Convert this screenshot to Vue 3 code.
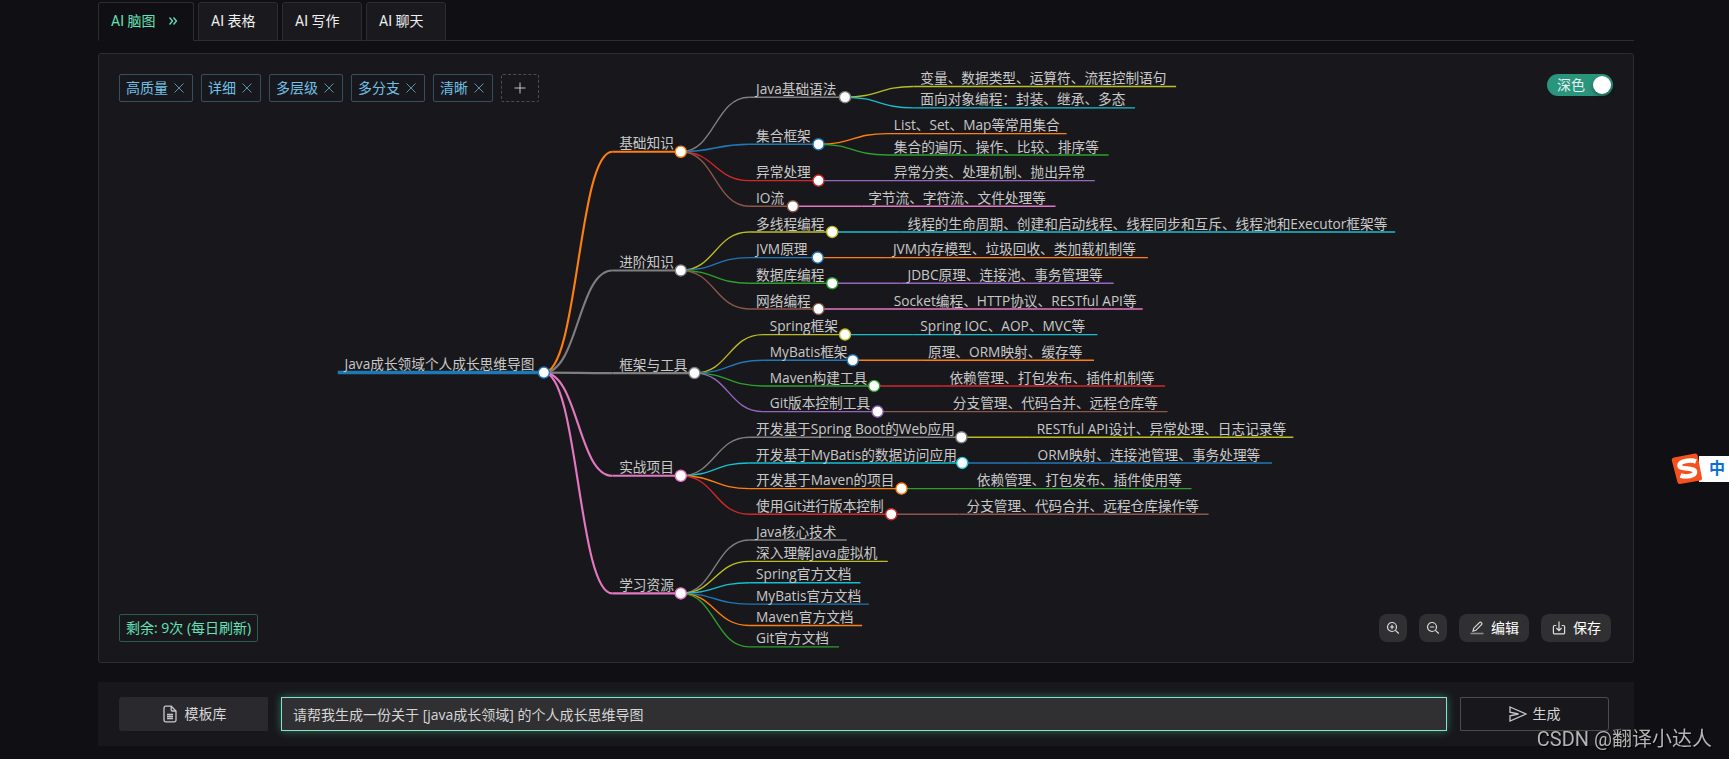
<script setup>
import { ref } from 'vue'

const tabs = ['AI 脑图', 'AI 表格', 'AI 写作', 'AI 聊天']
const activeTab = ref(0)
const tags = ref(['高质量', '详细', '多层级', '多分支', '清晰'])
const dark = ref(true)
const prompt = ref('请帮我生成一份关于 [java成长领域] 的个人成长思维导图')

const BLUE = '#1f77b4'
const ORANGE = '#ff7f0e'
const GREEN = '#2ca02c'
const RED = '#d62728'
const PURPLE = '#9467bd'
const BROWN = '#8c564b'
const PINK = '#e377c2'
const GRAY = '#7f7f7f'
const OLIVE = '#bcbd22'
const CYAN = '#17becf'

const n = (text, w, color, children = []) => ({ text, w, color, children })

const tree = n('Java成长领域个人成长思维导图', 241, BLUE, [
  n('基础知识', 80, ORANGE, [
    n('Java基础语法', 112, GRAY, [
      n('变量、数据类型、运算符、流程控制语句', 307, OLIVE),
      n('面向对象编程：封装、继承、多态', 259, CYAN),
    ]),
    n('集合框架', 81, BLUE, [
      n('List、Set、Map等常用集合', 210, ORANGE),
      n('集合的遍历、操作、比较、排序等', 259, GREEN),
    ]),
    n('异常处理', 81, RED, [n('异常分类、处理机制、抛出异常', 243, PURPLE)]),
    n('IO流', 51, BROWN, [n('字节流、字符流、文件处理等', 227, PINK)]),
  ]),
  n('进阶知识', 80, GRAY, [
    n('多线程编程', 97, OLIVE, [
      n('线程的生命周期、创建和启动线程、线程同步和互斥、线程池和Executor框架等', 578, CYAN),
    ]),
    n('JVM原理', 80, BLUE, [n('JVM内存模型、垃圾回收、类加载机制等', 306, ORANGE)]),
    n('数据库编程', 97, GREEN, [n('JDBC原理、连接池、事务管理等', 249, PURPLE)]),
    n('网络编程', 81, BROWN, [n('Socket编程、HTTP协议、RESTful API等', 299, PINK)]),
  ]),
  n('框架与工具', 96, GRAY, [
    n('Spring框架', 96, OLIVE, [n('Spring IOC、AOP、MVC等', 215, CYAN)]),
    n('MyBatis框架', 105, BLUE, [n('原理、ORM映射、缓存等', 202, ORANGE)]),
    n('Maven构建工具', 130, GREEN, [n('依赖管理、打包发布、插件机制等', 260, RED)]),
    n('Git版本控制工具', 134, PURPLE, [n('分支管理、代码合并、远程仓库等', 259, BROWN)]),
  ]),
  n('实战项目', 80, PINK, [
    n('开发基于Spring Boot的Web应用', 248, GRAY, [n('RESTful API设计、异常处理、日志记录等', 308, OLIVE)]),
    n('开发基于MyBatis的数据访问应用', 249, CYAN, [n('ORM映射、连接池管理、事务处理等', 282, BLUE)]),
    n('开发基于Maven的项目', 178, ORANGE, [n('依赖管理、打包发布、插件使用等', 259, GREEN)]),
    n('使用Git进行版本控制', 166, RED, [n('分支管理、代码合并、远程仓库操作等', 291, BROWN)]),
  ]),
  n('学习资源', 80, PINK, [
    n('Java核心技术', 114, GRAY),
    n('深入理解Java虚拟机', 162, OLIVE),
    n('Spring官方文档', 130, CYAN),
    n('MyBatis官方文档', 140, BLUE),
    n('Maven官方文档', 132, ORANGE),
    n('Git官方文档', 105, GREEN),
  ]),
])

// Tidy layout: leaves stack downwards, a parent sits midway between its outer children.
const LEVEL_GAP = 80
const SIBLING_STEP = 25
const COUSIN_STEP = 30
const strokes = [4, 2.5, 1.6, 1.6]
const nodes = []
const links = []
let nextY = 38
let lastParent = null

function place(node, parent, depth, x) {
  const end = x + node.w
  const placed = { ...node, x, end, depth, stroke: strokes[depth] }
  if (node.children.length) {
    const kids = node.children.map((c) => place(c, node, depth + 1, end + LEVEL_GAP))
    placed.y = (kids[0].y + kids[kids.length - 1].y) / 2
    kids.forEach((k) => {
      const mid = end + LEVEL_GAP / 2
      links.push({
        d: `M${end},${placed.y}C${mid},${placed.y} ${mid},${k.y} ${k.x},${k.y}`,
        color: k.color,
        stroke: k.stroke,
      })
    })
  } else {
    if (lastParent) nextY += lastParent === parent ? SIBLING_STEP : COUSIN_STEP
    placed.y = nextY
    lastParent = parent
  }
  nodes.push(placed)
  return placed
}
place(tree, null, 0, 279)

function removeTag(i) {
  tags.value.splice(i, 1)
}
</script>

<template>
  <main class="page">
    <nav class="tabs" aria-label="AI 工具">
      <button
        v-for="(t, i) in tabs"
        :key="t"
        type="button"
        class="tab"
        :class="{ active: i === activeTab }"
        @click="activeTab = i"
      >
        <span>{{ t }}</span>
        <svg v-if="i === activeTab" class="chevrons" width="10" height="10" viewBox="0 0 10 10" aria-hidden="true">
          <path d="M1.5 1.5 4.5 5l-3 3.5M5.500 1.500 8.500 5l-3 3.500" />
        </svg>
      </button>
    </nav>

    <section class="panel">
      <svg class="map" viewBox="0 0 1793 711" role="img" aria-label="思维导图">
        <path v-for="(l, i) in links" :key="i" :d="l.d" :stroke="l.color" :stroke-width="l.stroke" fill="none" />
        <g v-for="(m, i) in nodes" :key="'n' + i">
          <line :x1="m.x" :y1="m.y" :x2="m.end" :y2="m.y" :stroke="m.color" :stroke-width="m.stroke" />
          <circle v-if="m.children.length" :cx="m.end" :cy="m.y" r="6.5" fill="#fff" :stroke="m.color" />
          <text :x="m.x + 8" :y="m.y - 4">{{ m.text }}</text>
        </g>
      </svg>

      <div class="overlay">
        <div class="row">
          <div class="tags">
            <span v-for="(t, i) in tags" :key="t" class="tag">
              {{ t }}
              <button type="button" class="close" :aria-label="'移除' + t" @click="removeTag(i)">
                <svg width="14" height="14" viewBox="0 0 14 14"><path d="M2.500 2.500l9 9M11.500 2.500l-9 9" /></svg>
              </button>
            </span>
            <button type="button" class="add" aria-label="添加标签">
              <svg width="14" height="14" viewBox="0 0 14 14"><path d="M7 1.500v11M1.500 7h11" /></svg>
            </button>
          </div>
          <label class="switch">
            <input v-model="dark" type="checkbox" />
            <span>深色</span>
            <i class="knob"></i>
          </label>
        </div>

        <div class="row bottom">
          <span class="quota">剩余: 9次 (每日刷新)</span>
          <div class="actions">
            <button type="button" class="act square" aria-label="放大">
              <svg width="14" height="14" viewBox="0 0 14 14">
                <circle cx="6" cy="6" r="4.5" /><path d="M9.4 9.4l3.4 3.1M6 3.8v4.4M3.8 6h4.4" />
              </svg>
            </button>
            <button type="button" class="act square" aria-label="缩小">
              <svg width="14" height="14" viewBox="0 0 14 14">
                <circle cx="6" cy="6" r="4.5" /><path d="M9.4 9.4l3.4 3.1M3.8 6h4.4" />
              </svg>
            </button>
            <button type="button" class="act">
              <svg width="16" height="16" viewBox="0 0 16 16">
                <path d="M4 11.2l.8-3 5.6-5.6a1.3 1.3 0 0 1 1.9 0l.2.2a1.3 1.3 0 0 1 0 1.9L6.9 10.3z" />
                <path class="dim" d="M1.5 13.5h13" />
              </svg>
              编辑
            </button>
            <button type="button" class="act">
              <svg width="16" height="16" viewBox="0 0 16 16">
                <path d="M8 1.5v9M5.4 8 8 10.6 10.6 8" />
                <path d="M5.3 5.5H3.6a1.2 1.2 0 0 0-1.2 1.2v6a1.2 1.2 0 0 0 1.2 1.2h8.8a1.2 1.2 0 0 0 1.2-1.2v-6a1.2 1.2 0 0 0-1.2-1.2h-1.7" />
              </svg>
              保存
            </button>
          </div>
        </div>
      </div>
    </section>

    <form class="composer" @submit.prevent>
      <button type="button" class="template">
        <svg width="18" height="18" viewBox="0 0 18 18" aria-hidden="true">
          <path d="M10.2 1.2H4.6A1.6 1.6 0 0 0 3 2.8v12.4a1.6 1.6 0 0 0 1.6 1.6h8.800a1.600 1.600 0 0 0 1.600-1.600V6z" />
          <path d="M10.2 1.2V4.8A1.2 1.2 0 0 0 11.4 6H15M6 9.500h6M6 11.500h6M6 13.500h6" />
        </svg>
        模板库
      </button>
      <input v-model="prompt" class="prompt" type="text" aria-label="提示词" />
      <button type="submit" class="generate">
        <svg width="18" height="18" viewBox="0 0 18 18" aria-hidden="true">
          <path d="M1 2 17 9 1 16V10.8L9.5 9 1 7.2z" />
        </svg>
        生成
      </button>
    </form>

    <div class="ime" aria-hidden="true">
      <svg width="32" height="32" viewBox="0 0 32 32">
        <path d="M3 4.5 24 .5q2-.3 2.6 1.7L31 25q.3 2-1.7 2.500L9 31q-2 .3-2.5-1.7L.8 7.500Q.5 5 3 4.500z" fill="#f4511e" />
        <path
          d="M25 8.500C20 6.500 8.500 8 8.500 12.500c0 4.500 15.500 1.500 15.500 6.500 0 4-9 5.500-14.500 3.500"
          fill="none"
          stroke="#fff"
          stroke-width="4.6"
        />
      </svg>
      <span>中</span>
    </div>
    <div class="watermark">CSDN @翻译小达人</div>
  </main>
</template>

<style>
html,
body {
  background: #101014;
}
</style>

<style scoped>
.page {
  --sans: "Open Sans", "Noto Sans CJK SC", sans-serif;
  --card: #18181c;
  --line: #2d2d30;
  --primary: #63e2b7;
  box-sizing: border-box;
  padding: 2px 95px 13px 98px;
  font-family: var(--sans);
  font-size: 14px;
  line-height: 20px;
  color: #d5d5d6;
}
.page * {
  box-sizing: border-box;
}
button,
input {
  font: inherit;
  color: inherit;
}
button {
  padding: 0;
  border: 0;
  background: none;
  cursor: pointer;
}
svg {
  display: block;
  flex: none;
}

.tabs {
  display: flex;
  gap: 4px;
  box-shadow: inset 0 -1px var(--line);
}
.tab {
  display: flex;
  align-items: center;
  gap: 13px;
  height: 39px;
  min-width: 80px;
  padding: 0 12px 1px;
  border: 1px solid var(--line);
  border-radius: 3px 3px 0 0;
  background: #1a1a1e;
  color: #f0f0f0;
  font-family: Roboto, "Noto Sans CJK SC", sans-serif;
}
.tab.active {
  min-width: 96px;
  background: #101014;
  border-bottom-color: #101014;
  color: var(--primary);
}
.chevrons {
  fill: none;
  stroke: currentColor;
  stroke-width: 1.3;
}

.panel {
  display: grid;
  margin-top: 12px;
  border: 1px solid var(--line);
  border-radius: 3px;
  background: var(--card);
}
.map,
.overlay {
  grid-area: 1 / 1;
}
.map {
  width: 100%;
}
.map text {
  font-family: var(--sans);
  font-size: 16px;
  fill: #c8c8c8;
}
.map circle {
  stroke-width: 1.6;
}
.overlay {
  display: flex;
  flex-direction: column;
  justify-content: space-between;
  padding: 20px;
}
.row {
  display: flex;
  justify-content: space-between;
  align-items: flex-start;
}
.tags {
  display: flex;
  gap: 8px;
}
.tag,
.quota {
  display: flex;
  align-items: center;
  height: 28px;
  padding: 0 6px;
  border: 1px solid #335063;
  border-radius: 2px;
  color: #70c0e8;
  white-space: nowrap;
}
.tag {
  gap: 4px;
}
.close svg,
.add svg {
  fill: none;
  stroke: #5793b1;
}
.add {
  display: grid;
  place-items: center;
  width: 38px;
  height: 28px;
  border: 1px dashed #4e4e51;
  border-radius: 2px;
}
.add svg {
  stroke: #c4c4c5;
}
.switch {
  display: flex;
  align-items: center;
  justify-content: space-between;
  width: 66px;
  height: 22px;
  padding: 0 2px 0 10px;
  border-radius: 11px;
  background: #2a947d;
  color: #e2f2ee;
  cursor: pointer;
}
.switch input {
  position: absolute;
  opacity: 0;
  width: 1px;
  height: 1px;
  margin: 0;
}
.knob {
  width: 18px;
  height: 18px;
  border-radius: 9px;
  background: #fff;
  box-shadow: 0 2px 4px rgba(0, 0, 0, 0.4);
}
.quota {
  border-color: #2d5a4e;
  color: var(--primary);
}
.actions {
  display: flex;
  gap: 12px;
  margin-right: 2px;
}
.act {
  display: flex;
  align-items: center;
  justify-content: center;
  gap: 6px;
  width: 70px;
  height: 28px;
  border-radius: 8px;
  background: #303033;
  color: #fff;
}
.act.square {
  width: 28px;
}
.act svg {
  fill: none;
  stroke: #dcdcdc;
  stroke-width: 1.2;
}
.act .dim {
  stroke: #8b8b8d;
  stroke-width: 1.6;
}

.composer {
  display: flex;
  gap: 13px;
  margin-top: 19px;
  padding: 15px 25px 15px 21px;
  background: var(--card);
}
.template,
.generate {
  display: flex;
  align-items: center;
  justify-content: center;
  gap: 6px;
  flex: none;
  width: 149px;
  height: 34px;
}
.template {
  border-radius: 3px 0 0 3px;
  background: #2a2a2e;
}
.generate {
  border: 1px solid #4c4c4f;
  border-radius: 0 3px 3px 0;
}
.template svg,
.generate svg {
  fill: none;
  stroke: #c8c8c9;
  stroke-width: 1.3;
}
.prompt {
  flex: 1;
  min-width: 0;
  height: 34px;
  padding: 0 11px;
  border: 1px solid #7fe7c4;
  border-radius: 0;
  outline: 0;
  background: #303032;
  box-shadow: 0 0 8px rgba(99, 226, 183, 0.4);
}

.ime {
  position: fixed;
  right: 0;
  top: 453px;
  display: flex;
  align-items: center;
}
.ime svg {
  position: relative;
  z-index: 1;
}
.ime span {
  width: 30px;
  height: 26px;
  margin-left: -4px;
  padding-left: 10px;
  background: #fff;
  color: #0a6fd8;
  font-size: 16px;
  font-weight: 700;
  line-height: 24px;
}
.watermark {
  position: fixed;
  right: 17px;
  bottom: 6px;
  font-family: Roboto, "Noto Sans CJK SC", sans-serif;
  font-size: 20px;
  line-height: 28px;
  color: #b4b4b5;
  text-shadow: 1px 1px 1px #000;
  white-space: nowrap;
  pointer-events: none;
}
</style>
